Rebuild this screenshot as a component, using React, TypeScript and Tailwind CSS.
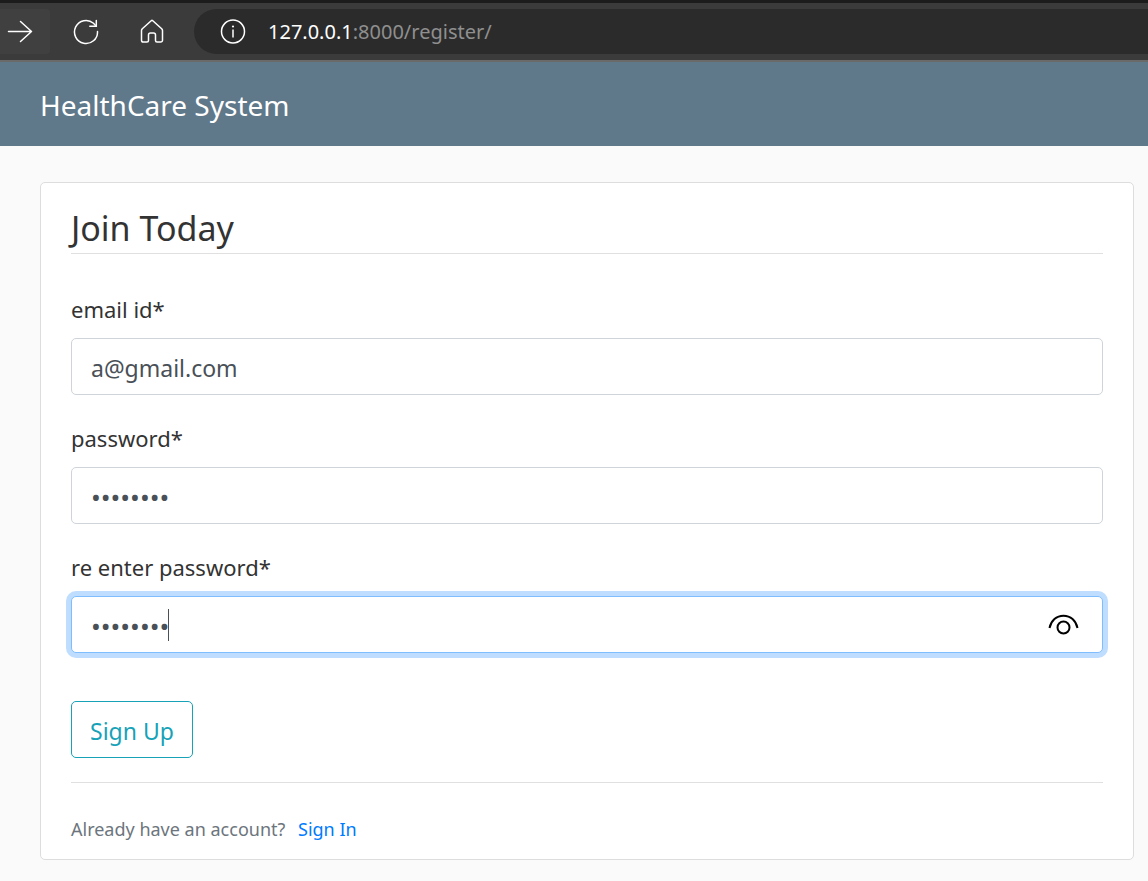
import { useState } from "react";
import type { ReactNode } from "react";

function ToolbarButton({ label, className = "", children }: { label: string; className?: string; children: ReactNode }) {
  return (
    <button type="button" aria-label={label} className={`flex shrink-0 items-center justify-center ${className}`}>
      {children}
    </button>
  );
}

function BrowserBar() {
  return (
    <div className="flex h-[62px] items-center border-t-3 border-b-2 border-t-[#1c1c1c] border-b-[#6a6a6a] bg-[#3b3b3b] pt-1 pb-[4px] font-['Noto_Sans',sans-serif] text-white">
      <ToolbarButton label="Forward" className="h-[45px] w-[50px] rounded-r bg-[#404040] pr-[10px]">
        <svg width="26" height="24" viewBox="0 0 26 24" fill="none" stroke="currentColor" strokeWidth="1.5" strokeLinecap="round" strokeLinejoin="round">
          <path d="M1.500 11.500H24.500M13.500 1.500l11 10L13.500 21.500" />
        </svg>
      </ToolbarButton>
      <ToolbarButton label="Refresh" className="ml-[14px] h-[45px] w-11">
        <svg width="26" height="26" viewBox="0 0 26 26" fill="none" stroke="currentColor" strokeWidth="1.5" strokeLinecap="round" strokeLinejoin="miter">
          <path d="M24.500 12.500A11.500 11.500 0 1 1 20.500 4.300L23 7" />
          <path d="M23.300 1.500V7.300H16.800" />
        </svg>
      </ToolbarButton>
      <ToolbarButton label="Home" className="ml-[22px] h-[45px] w-11">
        <svg width="24" height="26" viewBox="0 0 24 26" fill="none" stroke="currentColor" strokeWidth="1.5" strokeLinecap="round" strokeLinejoin="round">
          <path d="M11.200 1.700 2.300 9.700Q1.500 10.500 1.500 11.600V21.200a1.800 1.800 0 0 0 1.800 1.800H7A1.500 1.500 0 0 0 8.500 21.500V16a2 2 0 0 1 2-2h3a2 2 0 0 1 2 2v5.500a1.500 1.500 0 0 0 1.500 1.500h3.700a1.800 1.800 0 0 0 1.800-1.800V11.600Q22.500 10.500 21.700 9.700L12.800 1.700Q12 1 11.200 1.700Z" />
        </svg>
      </ToolbarButton>
      <div className="ml-5 flex h-[45px] min-w-0 flex-1 items-center rounded-l-full bg-[#2b2b2b] pl-[26px]">
        <svg width="26" height="26" viewBox="0 0 26 26" fill="none" stroke="currentColor" strokeWidth="1.5" aria-hidden="true">
          <circle cx="13" cy="12.500" r="11.500" />
          <path d="M13 10.500v8" />
          <circle cx="13" cy="7.500" r="1.100" fill="currentColor" stroke="none" />
        </svg>
        <span className="ml-[22px] text-[20px] leading-7 whitespace-nowrap text-[#8f8f8f]">
          <span className="text-white">127.0.0.1</span>:8000/register/
        </span>
      </div>
    </div>
  );
}

const labelClass = "mb-3 block text-[22px] leading-[34px] text-[#333]";
const inputClass = "block h-[57px] w-full rounded-[5px] border bg-white px-[19px] pt-[3px] text-[#495057] outline-none";

export default function App() {
  const [email, setEmail] = useState("a@gmail.com");
  const [password, setPassword] = useState("testing1");
  const [repeat, setRepeat] = useState("testing1");

  return (
    <div className="min-h-screen bg-[#fafafa] font-['Noto_Sans',sans-serif] text-[#333]">
      <BrowserBar />
      <header className="flex h-[84px] items-center bg-[#5f788a] px-10 pt-[2px]">
        <a href="#" className="text-[28px] leading-10 text-white">HealthCare System</a>
      </header>
      <main className="pt-9 pr-[14px] pb-[21px] pl-10">
        <section className="rounded-[5px] border border-[#dddddd] bg-white px-[30px] pt-6 pb-4">
          <form onSubmit={(e) => e.preventDefault()}>
            <h1 className="mb-[38px] border-b border-[#e0e0e0] pb-1 text-[34px] leading-[42px] font-normal">Join Today</h1>
            <div className="mb-[26px]">
              <label htmlFor="email" className={labelClass}>email id*</label>
              <input id="email" type="email" value={email} onChange={(e) => setEmail(e.target.value)} className={`${inputClass} border-[#ced4da] text-[23px]`} />
            </div>
            <div className="mb-[26px]">
              <label htmlFor="password" className={labelClass}>password*</label>
              <input id="password" type="password" value={password} onChange={(e) => setPassword(e.target.value)} className={`${inputClass} border-[#ced4da] text-[26px]`} />
            </div>
            <div className="mb-12">
              <label htmlFor="repeat" className={labelClass}>re enter password*</label>
              <div className="relative">
                <input id="repeat" type="password" value={repeat} onChange={(e) => setRepeat(e.target.value)} className={`${inputClass} border-[#80bdff] text-[26px] ring-[5px] ring-[#bfdeff]`} />
                <span className="absolute top-[13px] left-[97px] h-8 w-px bg-[#495057]" />
                <button type="button" aria-label="Show password" className="absolute top-[14px] right-6 text-black">
                  <svg width="32" height="28" viewBox="0 0 32 28" fill="none" stroke="currentColor" strokeWidth="2" strokeLinecap="butt">
                    <path d="M2.500 18C4 10.500 9.500 5.700 16.500 5.700s12.500 4.800 14 12.300" />
                    <circle cx="16.500" cy="17.500" r="6" />
                  </svg>
                </button>
              </div>
            </div>
            <button type="submit" className="h-[57px] rounded-[5px] border border-[#17a2b8] px-[18px] pt-1 text-[23px] text-[#17a2b8]">Sign Up</button>
          </form>
          <div className="mt-6 border-t border-[#e0e0e0] pt-8 text-[18px] leading-7 text-[#6c757d]">
            Already have an account? <a href="#" className="ml-2 text-[#007bff]">Sign In</a>
          </div>
        </section>
      </main>
    </div>
  );
}
